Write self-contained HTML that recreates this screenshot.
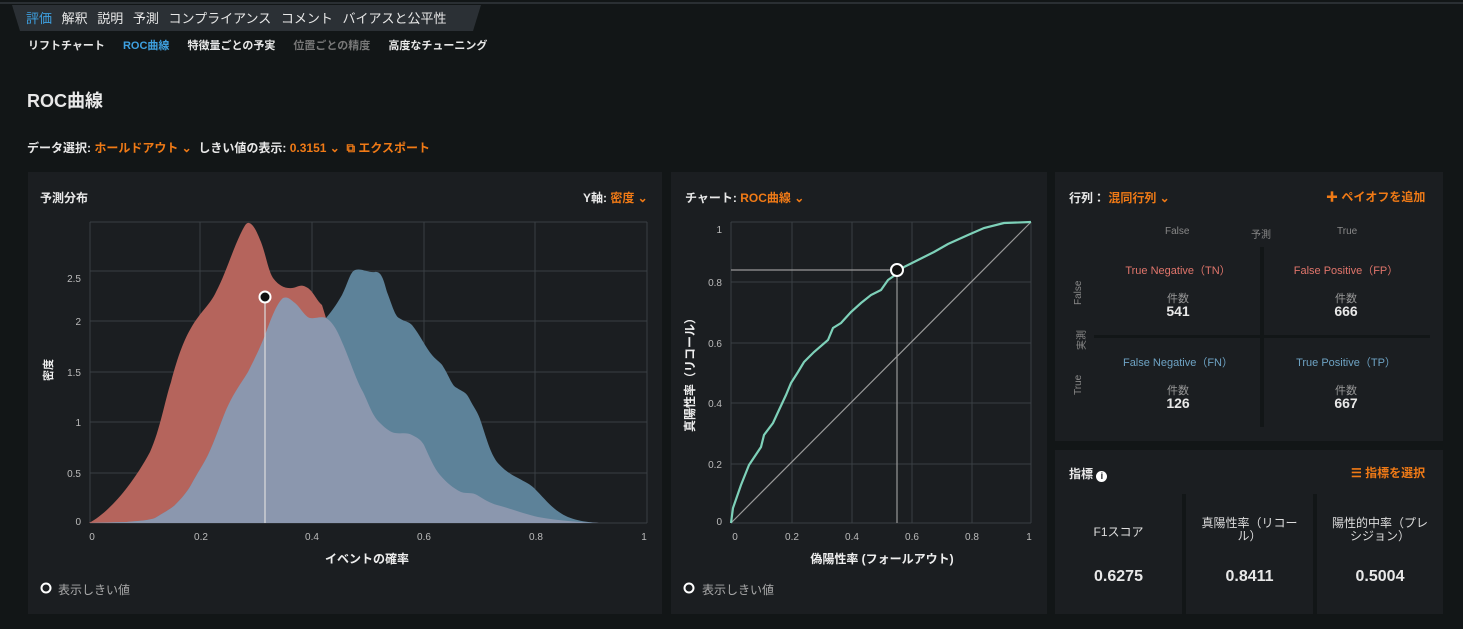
<!DOCTYPE html>
<html><head><meta charset="utf-8"><style>
*{margin:0;padding:0;box-sizing:border-box}
body{width:1463px;height:629px;background:#121617;font-family:"Liberation Sans","Noto Sans CJK JP",sans-serif;color:#e8e8e8;position:relative;overflow:hidden}
.a{position:absolute;white-space:nowrap}
.o{color:#f07a16}
.p{position:absolute;background:#1b1e21}
.b{font-weight:bold}
</style></head><body>
<div class="a" style="left:0;top:2px;width:1463px;height:2px;background:#2a2f33"></div>
<svg class="a" style="left:0;top:0" width="500" height="34"><polygon points="12,5 481,5 473,31 20,31" fill="#2b3035"/></svg>
<div class="a" style="left:26px;top:8px;font-size:13px;word-spacing:6px"><span style="color:#3ea0e0">評価</span> 解釈 説明 予測 コンプライアンス コメント バイアスと公平性</div>
<div class="a" style="left:28px;top:37px;font-size:11px;font-weight:bold;word-spacing:15px">リフトチャート <span style="color:#3ea0e0">ROC曲線</span> 特徴量ごとの予実 <span style="color:#777">位置ごとの精度</span> 高度なチューニング</div>
<div class="a b" style="left:27px;top:87px;font-size:18px">ROC曲線</div>
<div class="a b" style="left:27px;top:139px;font-size:12px">データ選択: <span class="o">ホールドアウト ⌄</span>&nbsp; しきい値の表示: <span class="o">0.3151 ⌄ &nbsp;⧉ エクスポート</span></div>

<div class="p" style="left:28px;top:172px;width:634px;height:442px"></div>
<div class="p" style="left:671px;top:172px;width:376px;height:442px"></div>
<div class="p" style="left:1055px;top:172px;width:388px;height:269px"></div>
<div class="p" style="left:1055px;top:450px;width:388px;height:164px;background:#1b1e21"></div>

<div class="a b" style="left:40px;top:189px;font-size:12px">予測分布</div>
<div class="a b" style="left:583px;top:189px;font-size:12px">Y軸: <span class="o">密度 ⌄</span></div>
<svg class="a" style="left:0;top:0" width="670" height="629">
<g stroke="#3a3f44" stroke-width="1">
<line x1="90" y1="222" x2="647" y2="222"/><line x1="90" y1="271" x2="647" y2="271"/><line x1="90" y1="321" x2="647" y2="321"/><line x1="90" y1="372" x2="647" y2="372"/><line x1="90" y1="422" x2="647" y2="422"/><line x1="90" y1="473" x2="647" y2="473"/><line x1="90" y1="523" x2="647" y2="523"/>
<line x1="90" y1="222" x2="90" y2="523"/><line x1="200" y1="222" x2="200" y2="523"/><line x1="312" y1="222" x2="312" y2="523"/><line x1="424" y1="222" x2="424" y2="523"/><line x1="535" y1="222" x2="535" y2="523"/><line x1="647" y1="222" x2="647" y2="523"/></g>
<path d="M89,523 C110,512 134,482 150,452 C160,430 165,400 171,382 C178,355 185,338 191,328 C200,312 210,305 216,292 C225,275 232,252 240,235 C244,227 246,222 249,223 C254,224 258,235 261,242 C266,255 268,270 273,278 C279,286 285,288 289,288 C296,289 300,283 306,287 C313,290 316,300 322,305 L326,318 C333,322 338,332 342,342 C350,360 356,380 363,392 C368,402 372,415 379,422 C385,428 390,432 395,433 C402,434 407,432 412,435 C418,438 421,440 424,445 C430,458 434,468 440,475 C447,483 453,488 461,492 C467,494 472,492 477,495 C485,500 490,503 497,505 C515,510 525,514 538,517 C560,521 580,522 599,523Z" fill="#b5645c"/>
<path d="M89,523 L126,522 C140,521 150,520 155,518 C165,512 172,508 175,505 C182,498 187,492 191,485 C198,472 203,465 208,455 C215,440 220,425 224,415 L326,318 C333,310 338,302 342,295 C348,283 350,272 355,270 C362,268 368,273 375,272 C382,271 384,282 387,292 C392,305 395,316 399,318 C405,322 408,321 412,325 C420,335 426,348 432,355 C438,362 441,362 444,368 C450,378 452,386 457,388 C463,392 466,392 469,398 C474,408 478,412 481,422 C487,440 490,452 497,462 C504,470 510,474 518,478 C525,482 530,484 534,488 C543,497 550,506 559,512 C570,520 585,522 599,523Z" fill="#5d8299"/>
<path d="M89,523 L126,522 C140,521 150,520 155,518 C165,512 172,508 175,505 C182,498 187,492 191,485 C198,472 203,465 208,455 C215,440 220,425 224,415 C232,395 240,385 248,372 C255,358 260,348 265,335 C270,322 276,304 283,298 C288,296 291,300 295,303 C300,307 305,317 310,318 C315,319 320,316 326,318 C333,322 338,332 342,342 C350,360 356,380 363,392 C368,402 372,415 379,422 C385,428 390,432 395,433 C402,434 407,432 412,435 C418,438 421,440 424,445 C430,458 434,468 440,475 C447,483 453,488 461,492 C467,494 472,492 477,495 C485,500 490,503 497,505 C515,510 525,514 538,517 C560,521 580,522 599,523Z" fill="#8b97ae"/>
<line x1="265" y1="298" x2="265" y2="523" stroke="#ddd" stroke-width="1.2"/>
<circle cx="265" cy="297" r="5.5" fill="#111" stroke="#fff" stroke-width="2"/>
<g fill="#bbb" font-size="10" font-family="Liberation Sans,sans-serif" text-anchor="end">
<text x="81" y="282">2.5</text><text x="81" y="325">2</text><text x="81" y="376">1.5</text><text x="81" y="426">1</text><text x="81" y="477">0.5</text><text x="81" y="525">0</text></g>
<g fill="#bbb" font-size="10" font-family="Liberation Sans,sans-serif" text-anchor="middle">
<text x="92" y="540">0</text><text x="201" y="540">0.2</text><text x="312" y="540">0.4</text><text x="424" y="540">0.6</text><text x="536" y="540">0.8</text><text x="644" y="540">1</text></g>
<text x="367" y="563" fill="#eee" font-size="12" font-weight="bold" text-anchor="middle" font-family="Liberation Sans,Noto Sans CJK JP,sans-serif">イベントの確率</text>
<text transform="translate(52,370) rotate(-90)" fill="#eee" font-size="11" font-weight="bold" text-anchor="middle" font-family="Liberation Sans,Noto Sans CJK JP,sans-serif">密度</text>
<circle cx="46" cy="588" r="4.5" fill="none" stroke="#fff" stroke-width="2"/>
</svg>
<div class="a" style="left:58px;top:581px;font-size:12px;color:#aaa">表示しきい値</div>

<div class="a b" style="left:685px;top:189px;font-size:12px">チャート: <span class="o">ROC曲線 ⌄</span></div>
<svg class="a" style="left:671px;top:0" width="376" height="629">
<g transform="translate(-671,0)">
<g stroke="#3a3f44" stroke-width="1">
<line x1="731" y1="222" x2="1031" y2="222"/><line x1="731" y1="282" x2="1031" y2="282"/><line x1="731" y1="343" x2="1031" y2="343"/><line x1="731" y1="403" x2="1031" y2="403"/><line x1="731" y1="464" x2="1031" y2="464"/><line x1="731" y1="523" x2="1031" y2="523"/>
<line x1="731" y1="222" x2="731" y2="523"/><line x1="792" y1="222" x2="792" y2="523"/><line x1="852" y1="222" x2="852" y2="523"/><line x1="912" y1="222" x2="912" y2="523"/><line x1="972" y1="222" x2="972" y2="523"/><line x1="1031" y1="222" x2="1031" y2="523"/></g>
<line x1="731" y1="523" x2="1031" y2="222" stroke="#999" stroke-width="1.2"/>
<line x1="731" y1="270" x2="897" y2="270" stroke="#999" stroke-width="1.2"/>
<line x1="897" y1="270" x2="897" y2="523" stroke="#999" stroke-width="1.2"/>
<polyline fill="none" stroke="#7ed1b9" stroke-width="2.2" points="731,523 733,508 741,485 749,465 761,447 764,435 773,423 779,410 786,395 791,383 798,372 804,362 814,352 828,340 833,328 841,323 851,312 861,303 871,295 881,290 888,280 898,273 904,267 918,260 934,252 948,244 968,235 984,228 1004,223 1031,222"/>
<circle cx="897" cy="270" r="6" fill="#111" stroke="#fff" stroke-width="2"/>
<g fill="#bbb" font-size="10" font-family="Liberation Sans,sans-serif" text-anchor="end">
<text x="722" y="233">1</text><text x="722" y="286">0.8</text><text x="722" y="347">0.6</text><text x="722" y="407">0.4</text><text x="722" y="468">0.2</text><text x="722" y="525">0</text></g>
<g fill="#bbb" font-size="10" font-family="Liberation Sans,sans-serif" text-anchor="middle">
<text x="735" y="540">0</text><text x="792" y="540">0.2</text><text x="852" y="540">0.4</text><text x="912" y="540">0.6</text><text x="972" y="540">0.8</text><text x="1029" y="540">1</text></g>
<text x="882" y="563" fill="#eee" font-size="12" font-weight="bold" text-anchor="middle" font-family="Liberation Sans,Noto Sans CJK JP,sans-serif">偽陽性率 (フォールアウト)</text>
<text transform="translate(694,372) rotate(-90)" fill="#eee" font-size="12" font-weight="bold" text-anchor="middle" font-family="Liberation Sans,Noto Sans CJK JP,sans-serif">真陽性率（リコール）</text>
<circle cx="689" cy="588" r="4.5" fill="none" stroke="#fff" stroke-width="2"/>
</g></svg>
<div class="a" style="left:702px;top:581px;font-size:12px;color:#aaa">表示しきい値</div>

<div class="a b" style="left:1069px;top:189px;font-size:12px">行列： <span class="o">混同行列 ⌄</span></div>
<div class="a b o" style="left:1326px;top:188px;font-size:12px">✚ ペイオフを追加</div>
<div class="a" style="left:1165px;top:226px;font-size:10px;color:#888">False</div>
<div class="a" style="left:1251px;top:226px;font-size:10px;color:#888">予測</div>
<div class="a" style="left:1337px;top:226px;font-size:10px;color:#888">True</div>
<div class="a" style="left:1094px;top:335px;width:336px;height:3px;background:#121617"></div>
<div class="a" style="left:1260px;top:247px;width:4px;height:180px;background:#121617"></div>
<div class="a" style="left:1073px;font-size:10px;color:#888;transform:rotate(-90deg);transform-origin:left top;top:305px">False</div>
<div class="a" style="left:1073px;top:350px;font-size:10px;color:#888;transform:rotate(-90deg);transform-origin:left top">実測</div>
<div class="a" style="left:1073px;top:395px;font-size:10px;color:#888;transform:rotate(-90deg);transform-origin:left top">True</div>
<div class="a" style="left:1100px;top:262px;width:156px;text-align:center;font-size:11px;color:#e0756b">True Negative（TN）</div>
<div class="a" style="left:1268px;top:262px;width:156px;text-align:center;font-size:11px;color:#e0756b">False Positive（FP）</div>
<div class="a" style="left:1100px;top:354px;width:156px;text-align:center;font-size:11px;color:#6ea3c4">False Negative（FN）</div>
<div class="a" style="left:1268px;top:354px;width:156px;text-align:center;font-size:11px;color:#6ea3c4">True Positive（TP）</div>
<div class="a" style="left:1100px;top:290px;width:156px;text-align:center;font-size:11px;color:#999">件数</div>
<div class="a" style="left:1268px;top:290px;width:156px;text-align:center;font-size:11px;color:#999">件数</div>
<div class="a" style="left:1100px;top:382px;width:156px;text-align:center;font-size:11px;color:#999">件数</div>
<div class="a" style="left:1268px;top:382px;width:156px;text-align:center;font-size:11px;color:#999">件数</div>
<div class="a b" style="left:1100px;top:303px;width:156px;text-align:center;font-size:14px">541</div>
<div class="a b" style="left:1268px;top:303px;width:156px;text-align:center;font-size:14px">666</div>
<div class="a b" style="left:1100px;top:395px;width:156px;text-align:center;font-size:14px">126</div>
<div class="a b" style="left:1268px;top:395px;width:156px;text-align:center;font-size:14px">667</div>

<div class="a b" style="left:1069px;top:465px;font-size:12px">指標 <span style="display:inline-block;width:11px;height:11px;border-radius:50%;background:#fff;color:#1b1e21;font-size:9px;text-align:center;line-height:11px;vertical-align:-1px">i</span></div>
<div class="a b o" style="left:1351px;top:464px;font-size:12px">☰ 指標を選択</div>
<div class="a" style="left:1182px;top:494px;width:4px;height:120px;background:#121617"></div>
<div class="a" style="left:1313px;top:494px;width:4px;height:120px;background:#121617"></div>
<div class="a" style="left:1055px;top:523px;width:127px;text-align:center;font-size:12px;color:#ddd">F1スコア</div>
<div class="a" style="left:1186px;top:517px;width:127px;text-align:center;font-size:12px;color:#ddd;white-space:normal;line-height:13px;padding:0 12px">真陽性率（リコール）</div>
<div class="a" style="left:1317px;top:517px;width:126px;text-align:center;font-size:12px;color:#ddd;white-space:normal;line-height:13px;padding:0 10px">陽性的中率（プレシジョン）</div>
<div class="a b" style="left:1055px;top:568px;width:127px;text-align:center;font-size:16px">0.6275</div>
<div class="a b" style="left:1186px;top:568px;width:127px;text-align:center;font-size:16px">0.8411</div>
<div class="a b" style="left:1317px;top:568px;width:126px;text-align:center;font-size:16px">0.5004</div>
</body></html>
